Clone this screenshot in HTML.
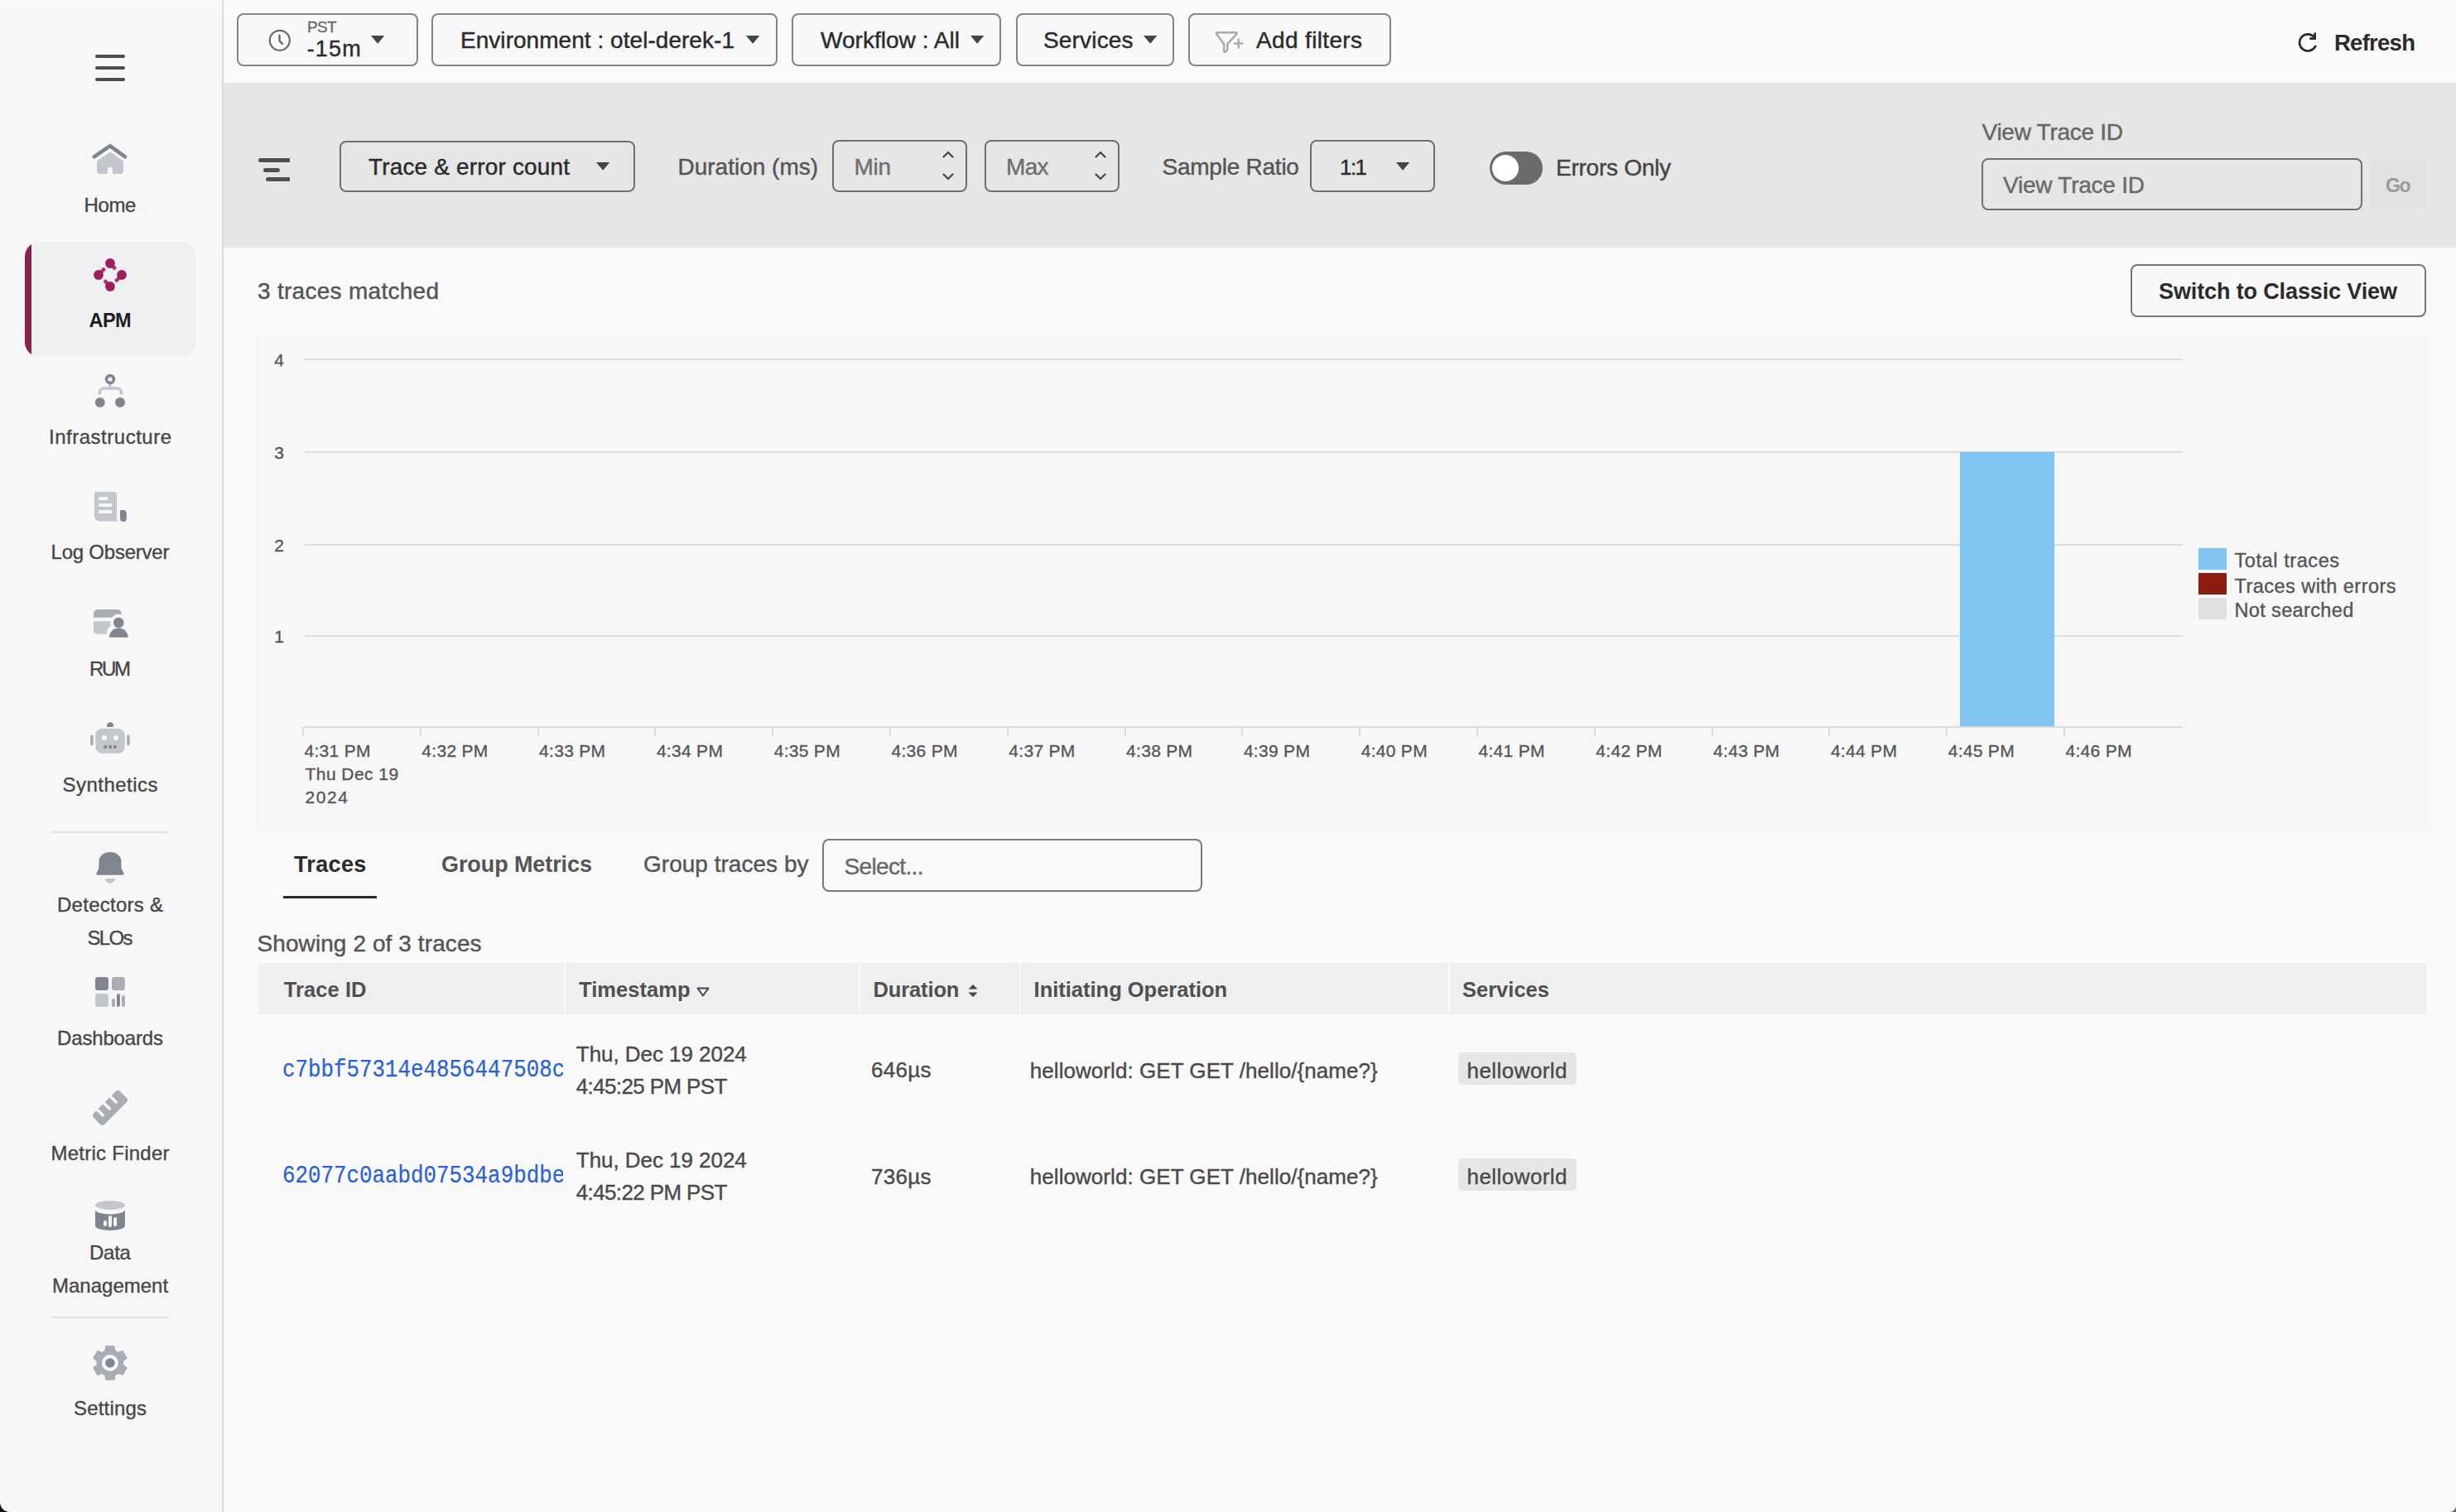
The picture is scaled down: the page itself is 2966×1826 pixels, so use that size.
<!DOCTYPE html>
<html><head><meta charset="utf-8"><title>APM Trace Analyzer</title>
<style>
html,body{margin:0;padding:0;}
body{width:2966px;height:1826px;overflow:hidden;position:relative;background:#f9f9f9;font-family:"Liberation Sans",sans-serif;}
.t{position:absolute;white-space:pre;line-height:1;}
.r{position:absolute;}
svg.r{overflow:visible;}
</style></head><body>
<div class="r" style="left:0px;top:0px;width:268px;height:1826px;background:#f7f7f7;"></div>
<div class="r" style="left:0px;top:0px;width:268px;height:12px;background:#f9f9f9;"></div>
<div class="r" style="left:268px;top:0px;width:2px;height:1826px;background:#dcdcdc;"></div>
<div class="r" style="left:270px;top:0px;width:2696px;height:100px;background:#f9f9f9;"></div>
<div class="r" style="left:270px;top:100px;width:2696px;height:199px;background:#e6e6e6;"></div>
<div class="r" style="left:270px;top:299px;width:2696px;height:1527px;background:#f9f9f9;"></div>
<div class="r" style="left:115px;top:66px;width:36px;height:4px;background:#4d4d4d;border-radius:2px;"></div>
<div class="r" style="left:115px;top:80px;width:36px;height:4px;background:#4d4d4d;border-radius:2px;"></div>
<div class="r" style="left:115px;top:94px;width:36px;height:4px;background:#4d4d4d;border-radius:2px;"></div>
<svg class="r" style="left:108px;top:170px" width="50" height="46" viewBox="0 0 50 46"><path d="M9 24.5 L24.9 13.4 L41 24.5 V36 a4 4 0 0 1 -4 4 H28.1 V34.9 a3.15 3.15 0 0 0 -6.3 0 V40 H13 a4 4 0 0 1 -4 -4 Z" fill="#c2c6cd"/><path d="M5.7 19.3 L24.9 6.2 L43 19.3" fill="none" stroke="#7f8691" stroke-width="4.6" stroke-linecap="round" stroke-linejoin="round"/></svg>
<div class="t" style="left:101.50px;top:236.10px;font-size:24px;color:#474747;-webkit-text-stroke:0.36px currentColor;letter-spacing:-0.360px;">Home</div>
<div class="r" style="left:30px;top:292px;width:206px;height:139px;border-radius:18px;background:#eff0f2;overflow:hidden"><div style="position:absolute;left:0;top:0;width:8px;height:139px;background:#8a1f50"></div></div>
<svg class="r" style="left:100px;top:300px" width="66" height="64" viewBox="0 0 66 64"><g stroke="#c0286f" stroke-width="4.2" stroke-linecap="butt"><line x1="33" y1="18" x2="39.5" y2="25"/><line x1="47" y1="32" x2="39.5" y2="40"/><line x1="33" y1="46" x2="26" y2="38.5"/><line x1="19" y1="32" x2="26.5" y2="24"/></g><circle cx="33" cy="18" r="5.9" fill="#9c1f5b"/><circle cx="19" cy="32" r="5.9" fill="#9c1f5b"/><circle cx="47" cy="32" r="5.9" fill="#9c1f5b"/><circle cx="33" cy="46" r="5.9" fill="#9c1f5b"/></svg>
<div class="t" style="left:107.50px;top:376.41px;font-size:23.5px;color:#1c1e21;font-weight:700;letter-spacing:-0.585px;">APM</div>
<svg class="r" style="left:100px;top:440px" width="66" height="60" viewBox="0 0 66 60"><path d="M20.5 36.5 V34 a5 5 0 0 1 5 -5 H41.5 a5 5 0 0 1 5 5 V36.5" fill="none" stroke="#c2c6cd" stroke-width="3.6"/><rect x="31.3" y="22" width="3.4" height="8" fill="#c2c6cd"/><circle cx="33" cy="18" r="4.4" fill="none" stroke="#7f8691" stroke-width="3.6"/><circle cx="20.8" cy="46" r="6" fill="#7f8691"/><circle cx="45" cy="46" r="6" fill="#7f8691"/></svg>
<div class="t" style="left:59.00px;top:515.70px;font-size:24px;color:#474747;-webkit-text-stroke:0.36px currentColor;letter-spacing:0.511px;">Infrastructure</div>
<svg class="r" style="left:100px;top:580px" width="66" height="60" viewBox="0 0 66 60"><path d="M14 17 a3 3 0 0 1 3 -3 H38 a3 3 0 0 1 3 3 V47 a2.6 2.6 0 0 0 2.6 2.6 H20 a6 6 0 0 1 -6 -6 Z" fill="#c2c6cd"/><line x1="21" y1="22" x2="28.8" y2="22" stroke="#f7f7f7" stroke-width="4" stroke-linecap="round"/><line x1="21" y1="30" x2="33.9" y2="30" stroke="#f7f7f7" stroke-width="4" stroke-linecap="round"/><line x1="21" y1="38" x2="33.9" y2="38" stroke="#f7f7f7" stroke-width="4" stroke-linecap="round"/><path d="M45 36 H49 a3.8 3.8 0 0 1 3.8 3.8 V46 a3.9 3.9 0 0 1 -7.8 0 Z" fill="#7f8691"/></svg>
<div class="t" style="left:61.50px;top:655.30px;font-size:24px;color:#474747;-webkit-text-stroke:0.36px currentColor;letter-spacing:-0.222px;">Log Observer</div>
<svg class="r" style="left:100px;top:725px" width="66" height="60" viewBox="0 0 66 60"><path d="M13 20.8 V16 a5 5 0 0 1 5 -5 H42 a5 5 0 0 1 4.8 5 V17.5 a11 11 0 0 0 -11.8 3.3 Z" fill="#a7acb5"/><path d="M13 25.2 H33.6 L33.5 31 A12 12 0 0 0 28.7 40.7 H18 a5 5 0 0 1 -5 -5 Z" fill="#c2c6cd"/><circle cx="43.3" cy="27" r="6.3" fill="#7f8691"/><path d="M32 44.8 a11.3 11.3 0 0 1 22.6 0 Z" fill="#7f8691"/></svg>
<div class="t" style="left:108.00px;top:796.00px;font-size:24px;color:#474747;-webkit-text-stroke:0.36px currentColor;letter-spacing:-2.300px;">RUM</div>
<svg class="r" style="left:100px;top:860px" width="66" height="60" viewBox="0 0 66 60"><path d="M29.2 18 V16 a3.85 3.85 0 0 1 7.7 0 V18 Z" fill="#7f8691"/><rect x="15.3" y="20" width="35.5" height="29.8" rx="8" fill="#c2c6cd"/><circle cx="26" cy="31" r="3.1" fill="#f7f7f7"/><circle cx="39.9" cy="31" r="3.1" fill="#f7f7f7"/><path d="M27 40 H29 V43.8 H27 a1.9 1.9 0 0 1 0 -3.8 Z M31.2 40 H35 V43.8 H31.2 Z M37 40 H39 a1.9 1.9 0 0 1 0 3.8 H37 Z" fill="#7f8691"/><rect x="9.1" y="27.4" width="3.6" height="13.1" rx="1.8" fill="#a7acb5"/><rect x="53.2" y="27.4" width="3.6" height="13.1" rx="1.8" fill="#a7acb5"/></svg>
<div class="t" style="left:75.50px;top:935.70px;font-size:24px;color:#474747;-webkit-text-stroke:0.36px currentColor;letter-spacing:0.471px;">Synthetics</div>
<div class="r" style="left:62px;top:1004px;width:142px;height:2px;background:#e2e2e2;"></div>
<svg class="r" style="left:100px;top:1020px" width="66" height="60" viewBox="0 0 66 60"><path d="M19.5 20 a13.5 11 0 0 1 27 0 V29 L49.5 34.5 a1.6 1.6 0 0 1 -1.4 2.3 H17.9 a1.6 1.6 0 0 1 -1.4 -2.3 L19.2 29 Z" fill="#7f8691"/><path d="M27 41 H39 a6 5.8 0 0 1 -12 0 Z" fill="#c2c6cd"/></svg>
<div class="t" style="left:69.00px;top:1081.10px;font-size:24px;color:#474747;-webkit-text-stroke:0.36px currentColor;letter-spacing:0.260px;">Detectors &amp;</div>
<div class="t" style="left:105.50px;top:1121.20px;font-size:24px;color:#474747;-webkit-text-stroke:0.36px currentColor;letter-spacing:-1.667px;">SLOs</div>
<svg class="r" style="left:100px;top:1170px" width="66" height="60" viewBox="0 0 66 60"><rect x="15" y="10" width="16" height="16" rx="3.2" fill="#7f8691"/><rect x="35" y="10" width="15.8" height="16" rx="3.2" fill="#a7acb5"/><rect x="15" y="30" width="16" height="16" rx="3.2" fill="#c2c6cd"/><rect x="35" y="36" width="3.9" height="10" rx="1.95" fill="#a7acb5"/><rect x="41" y="30" width="3.9" height="16" rx="1.95" fill="#7f8691"/><rect x="47" y="32" width="3.9" height="14" rx="1.95" fill="#a7acb5"/></svg>
<div class="t" style="left:69.00px;top:1241.50px;font-size:24px;color:#474747;-webkit-text-stroke:0.36px currentColor;letter-spacing:-0.151px;">Dashboards</div>
<svg class="r" style="left:100px;top:1305px" width="66" height="60" viewBox="0 0 66 60"><g transform="translate(32.95,32.85) rotate(-45)"><rect x="-22.5" y="-9.3" width="45" height="18.6" rx="3.8" fill="#a7acb5"/><line x1="-12.5" y1="-11" x2="-12.5" y2="0.2" stroke="#f7f7f7" stroke-width="3.6" stroke-linecap="round"/><line x1="-1.2" y1="-11" x2="-1.2" y2="0.2" stroke="#f7f7f7" stroke-width="3.6" stroke-linecap="round"/><line x1="10" y1="-11" x2="10" y2="0.2" stroke="#f7f7f7" stroke-width="3.6" stroke-linecap="round"/></g></svg>
<div class="t" style="left:61.50px;top:1381.00px;font-size:24px;color:#474747;-webkit-text-stroke:0.36px currentColor;letter-spacing:0.247px;">Metric Finder</div>
<svg class="r" style="left:100px;top:1440px" width="66" height="60" viewBox="0 0 66 60"><ellipse cx="33" cy="15.5" rx="18" ry="5.4" fill="#c2c6cd"/><path d="M15 21 A18 5.4 0 0 0 51 21 V40.5 A18 5.4 0 0 1 15 40.5 Z" fill="#7f8691"/><line x1="27" y1="36" x2="27" y2="39" stroke="#f7f7f7" stroke-width="4" stroke-linecap="round"/><line x1="33" y1="30" x2="33" y2="40" stroke="#f7f7f7" stroke-width="4" stroke-linecap="round"/><line x1="39" y1="32" x2="39" y2="39" stroke="#f7f7f7" stroke-width="4" stroke-linecap="round"/></svg>
<div class="t" style="left:108.00px;top:1501.20px;font-size:24px;color:#474747;-webkit-text-stroke:0.36px currentColor;letter-spacing:-0.253px;">Data</div>
<div class="t" style="left:63.00px;top:1541.00px;font-size:24px;color:#474747;-webkit-text-stroke:0.36px currentColor;">Management</div>
<div class="r" style="left:62px;top:1590px;width:142px;height:2px;background:#e2e2e2;"></div>
<svg class="r" style="left:100px;top:1615px" width="66" height="60" viewBox="0 0 66 60"><polygon points="27.35,16.53 28.29,11.03 37.51,11.03 38.45,16.53 42.65,18.95 47.89,17.02 52.50,25.01 48.21,28.58 48.21,33.42 52.50,36.99 47.89,44.98 42.65,43.05 38.45,45.47 37.51,50.97 28.29,50.97 27.35,45.47 23.15,43.05 17.91,44.98 13.30,36.99 17.59,33.42 17.59,28.58 13.30,25.01 17.91,17.02 23.15,18.95" fill="#a7acb5" stroke="#a7acb5" stroke-width="2" stroke-linejoin="round"/><circle cx="32.9" cy="31" r="10" fill="#f7f7f7"/><circle cx="32.9" cy="31" r="5.8" fill="#7f8691"/></svg>
<div class="t" style="left:89.00px;top:1688.50px;font-size:24px;color:#474747;-webkit-text-stroke:0.36px currentColor;letter-spacing:0.177px;">Settings</div>
<div class="r" style="left:0;top:1814px;width:12px;height:12px;background:radial-gradient(circle at 12px 0px, transparent 11.5px, #111a14 12.5px)"></div>
<div class="r" style="left:286px;top:16px;width:219px;height:64px;background:#f8f8f8;border:2px solid #858585;box-sizing:border-box;border-radius:8px;"></div>
<svg class="r" style="left:320px;top:31px" width="36" height="36" viewBox="0 0 36 36"><circle cx="17.8" cy="17.8" r="12" fill="none" stroke="#6b6b6b" stroke-width="2.2"/><path d="M17.5 11.6 V18.3 L21 21.8" fill="none" stroke="#6b6b6b" stroke-width="2.4" stroke-linecap="round" stroke-linejoin="round"/></svg>
<div class="t" style="left:371.00px;top:23.03px;font-size:19px;color:#666666;-webkit-text-stroke:0.28px currentColor;letter-spacing:-0.727px;">PST</div>
<div class="t" style="left:370.70px;top:46.32px;font-size:27px;color:#2b2b2b;-webkit-text-stroke:0.40px currentColor;letter-spacing:1.147px;">-15m</div>
<svg class="r" style="left:448.2px;top:43.2px" width="20" height="14" viewBox="0 0 20 14"><path d="M0 0 H16.3 L8.15 9.8 Z" fill="#444"/></svg>
<div class="r" style="left:521px;top:16px;width:418px;height:64px;background:#f8f8f8;border:2px solid #858585;box-sizing:border-box;border-radius:8px;"></div>
<div class="t" style="left:556.00px;top:35.30px;font-size:28px;color:#2b2b2b;-webkit-text-stroke:0.42px currentColor;letter-spacing:0.041px;">Environment : otel-derek-1</div>
<svg class="r" style="left:901px;top:42.6px" width="20" height="14" viewBox="0 0 20 14"><path d="M0 0 H16.3 L8.15 9.8 Z" fill="#444"/></svg>
<div class="r" style="left:956px;top:16px;width:253px;height:64px;background:#f8f8f8;border:2px solid #858585;box-sizing:border-box;border-radius:8px;"></div>
<div class="t" style="left:991.00px;top:35.30px;font-size:28px;color:#2b2b2b;-webkit-text-stroke:0.42px currentColor;letter-spacing:0.032px;">Workflow : All</div>
<svg class="r" style="left:1172px;top:42.6px" width="20" height="14" viewBox="0 0 20 14"><path d="M0 0 H16.3 L8.15 9.8 Z" fill="#444"/></svg>
<div class="r" style="left:1227px;top:16px;width:191px;height:64px;background:#f8f8f8;border:2px solid #858585;box-sizing:border-box;border-radius:8px;"></div>
<div class="t" style="left:1260.00px;top:35.30px;font-size:28px;color:#2b2b2b;-webkit-text-stroke:0.42px currentColor;letter-spacing:0.174px;">Services</div>
<svg class="r" style="left:1380.5px;top:42.6px" width="20" height="14" viewBox="0 0 20 14"><path d="M0 0 H16.3 L8.15 9.8 Z" fill="#444"/></svg>
<div class="r" style="left:1435px;top:16px;width:245px;height:64px;background:#f8f8f8;border:2px solid #858585;box-sizing:border-box;border-radius:8px;"></div>
<svg class="r" style="left:1455px;top:25px" width="60" height="50" viewBox="0 0 60 50"><path d="M15.2 14.2 H37.5 a1.2 1.2 0 0 1 0.9 2 L27.3 28.2 V35.6 L24.5 37.8 a0.8 0.8 0 0 1 -1.3 -0.6 V28.2 L14.3 16.2 a1.2 1.2 0 0 1 0.9 -2 Z" fill="none" stroke="#ababab" stroke-width="2.5" stroke-linejoin="round"/><path d="M40.7 22.8 V32.2 M36 27.5 H45.4" stroke="#ababab" stroke-width="2.5" stroke-linecap="round"/></svg>
<div class="t" style="left:1517.00px;top:35.30px;font-size:28px;color:#2b2b2b;-webkit-text-stroke:0.42px currentColor;letter-spacing:0.354px;">Add filters</div>
<svg class="r" style="left:2770px;top:34px" width="34" height="34" viewBox="0 0 34 34"><path d="M24.6 10.6 A10.1 10.1 0 1 0 26.2 21.8" fill="none" stroke="#2b2b2b" stroke-width="2.7" stroke-linecap="round"/><path d="M25.6 5.6 V12.6 H19.2" fill="none" stroke="#2b2b2b" stroke-width="2.7" stroke-linecap="butt" stroke-linejoin="miter"/></svg>
<div class="t" style="left:2819.00px;top:37.51px;font-size:27.5px;color:#2b2b2b;font-weight:700;letter-spacing:-0.740px;">Refresh</div>
<div class="r" style="left:312px;top:191px;width:38px;height:5px;background:#4f4f4f;border-radius:2.5px 0 0 2.5px;"></div>
<div class="r" style="left:318px;top:202.5px;width:20px;height:5.0px;background:#4f4f4f;border-radius:2.5px;"></div>
<div class="r" style="left:321px;top:214px;width:29px;height:5px;background:#4f4f4f;border-radius:2.5px 0 0 2.5px;"></div>
<div class="r" style="left:410px;top:170px;width:357px;height:62px;border:2px solid #707070;box-sizing:border-box;border-radius:8px;"></div>
<div class="t" style="left:445.00px;top:188.40px;font-size:28px;color:#2b2b2b;-webkit-text-stroke:0.42px currentColor;letter-spacing:0.161px;">Trace &amp; error count</div>
<svg class="r" style="left:720.3px;top:196px" width="20" height="14" viewBox="0 0 20 14"><path d="M0 0 H16.3 L8.15 9.8 Z" fill="#444"/></svg>
<div class="t" style="left:818.50px;top:188.40px;font-size:28px;color:#555555;-webkit-text-stroke:0.42px currentColor;">Duration (ms)</div>
<div class="r" style="left:1005px;top:169px;width:163px;height:63px;border:2px solid #707070;box-sizing:border-box;border-radius:8px;"></div>
<div class="t" style="left:1031.50px;top:187.60px;font-size:28px;color:#6f6f6f;-webkit-text-stroke:0.42px currentColor;letter-spacing:-0.290px;">Min</div>
<svg class="r" style="left:1137px;top:180px" width="16" height="40" viewBox="0 0 16 40"><path d="M2.5 9.5 L8 4 L13.5 9.5" fill="none" stroke="#444" stroke-width="2.2" stroke-linecap="round" stroke-linejoin="round"/><path d="M2.5 30.5 L8 36 L13.5 30.5" fill="none" stroke="#444" stroke-width="2.2" stroke-linecap="round" stroke-linejoin="round"/></svg>
<div class="r" style="left:1189px;top:169px;width:163px;height:63px;border:2px solid #707070;box-sizing:border-box;border-radius:8px;"></div>
<div class="t" style="left:1215.00px;top:187.60px;font-size:28px;color:#6f6f6f;-webkit-text-stroke:0.42px currentColor;letter-spacing:-0.660px;">Max</div>
<svg class="r" style="left:1321px;top:180px" width="16" height="40" viewBox="0 0 16 40"><path d="M2.5 9.5 L8 4 L13.5 9.5" fill="none" stroke="#444" stroke-width="2.2" stroke-linecap="round" stroke-linejoin="round"/><path d="M2.5 30.5 L8 36 L13.5 30.5" fill="none" stroke="#444" stroke-width="2.2" stroke-linecap="round" stroke-linejoin="round"/></svg>
<div class="t" style="left:1403.50px;top:187.60px;font-size:28px;color:#555555;-webkit-text-stroke:0.42px currentColor;letter-spacing:-0.240px;">Sample Ratio</div>
<div class="r" style="left:1582px;top:169px;width:151px;height:63px;border:2px solid #707070;box-sizing:border-box;border-radius:8px;"></div>
<div class="t" style="left:1618.00px;top:189.25px;font-size:26px;color:#2b2b2b;-webkit-text-stroke:0.39px currentColor;letter-spacing:-1.570px;">1:1</div>
<svg class="r" style="left:1686px;top:196px" width="20" height="14" viewBox="0 0 20 14"><path d="M0 0 H16.3 L8.15 9.8 Z" fill="#444"/></svg>
<div class="r" style="left:1799px;top:183px;width:64px;height:40px;background:#6b6b6b;border-radius:20px;"></div>
<div class="r" style="left:1802px;top:187px;width:32px;height:32px;background:#ffffff;border-radius:16px;"></div>
<div class="t" style="left:1879.00px;top:188.50px;font-size:28px;color:#444444;-webkit-text-stroke:0.42px currentColor;letter-spacing:-0.254px;">Errors Only</div>
<div class="t" style="left:2393.50px;top:145.90px;font-size:28px;color:#666666;-webkit-text-stroke:0.42px currentColor;letter-spacing:-0.270px;">View Trace ID</div>
<div class="r" style="left:2393px;top:191px;width:460px;height:63px;border:2px solid #707070;box-sizing:border-box;border-radius:8px;"></div>
<div class="t" style="left:2419.00px;top:209.70px;font-size:28px;color:#6a6a6a;-webkit-text-stroke:0.42px currentColor;letter-spacing:-0.228px;">View Trace ID</div>
<div class="r" style="left:2863px;top:191px;width:67px;height:61px;background:#e1e1e1;border-radius:6px;"></div>
<div class="t" style="left:2881.00px;top:212.83px;font-size:23px;color:#9a9a9a;font-weight:700;letter-spacing:-1.470px;">Go</div>
<div class="t" style="left:311.00px;top:337.90px;font-size:28px;color:#555555;-webkit-text-stroke:0.42px currentColor;letter-spacing:0.283px;">3 traces matched</div>
<div class="r" style="left:2573px;top:319px;width:357px;height:64px;background:#f8f8f8;border:2px solid #777777;box-sizing:border-box;border-radius:8px;"></div>
<div class="t" style="left:2607.00px;top:339.43px;font-size:27px;color:#2b2b2b;font-weight:700;letter-spacing:-0.126px;">Switch to Classic View</div>
<div class="r" style="left:310px;top:403px;width:2620px;height:600px;background:#f7f7f7;"></div>
<div class="r" style="left:368px;top:433px;width:2268px;height:2px;background:#dddddd;"></div>
<div class="t" style="left:331.35px;top:423.57px;font-size:21px;color:#555555;-webkit-text-stroke:0.32px currentColor;">4</div>
<div class="r" style="left:368px;top:545px;width:2268px;height:2px;background:#dddddd;"></div>
<div class="t" style="left:331.35px;top:535.57px;font-size:21px;color:#555555;-webkit-text-stroke:0.32px currentColor;">3</div>
<div class="r" style="left:368px;top:657px;width:2268px;height:2px;background:#dddddd;"></div>
<div class="t" style="left:331.35px;top:647.57px;font-size:21px;color:#555555;-webkit-text-stroke:0.32px currentColor;">2</div>
<div class="r" style="left:368px;top:767px;width:2268px;height:2px;background:#dddddd;"></div>
<div class="t" style="left:331.35px;top:757.57px;font-size:21px;color:#555555;-webkit-text-stroke:0.32px currentColor;">1</div>
<div class="r" style="left:366px;top:877px;width:2270px;height:2px;background:#dcdcdc;"></div>
<div class="r" style="left:2367px;top:546px;width:114px;height:331px;background:#80c4f4;"></div>
<div class="r" style="left:365px;top:878px;width:2px;height:11px;background:#dcdcdc;"></div>
<div class="t" style="left:367.50px;top:895.67px;font-size:21px;color:#555555;-webkit-text-stroke:0.32px currentColor;letter-spacing:0.296px;">4:31 PM</div>
<div class="r" style="left:507px;top:878px;width:2px;height:11px;background:#dcdcdc;"></div>
<div class="t" style="left:509.30px;top:895.67px;font-size:21px;color:#555555;-webkit-text-stroke:0.32px currentColor;letter-spacing:0.296px;">4:32 PM</div>
<div class="r" style="left:649px;top:878px;width:2px;height:11px;background:#dcdcdc;"></div>
<div class="t" style="left:651.10px;top:895.67px;font-size:21px;color:#555555;-webkit-text-stroke:0.32px currentColor;letter-spacing:0.296px;">4:33 PM</div>
<div class="r" style="left:790px;top:878px;width:2px;height:11px;background:#dcdcdc;"></div>
<div class="t" style="left:792.90px;top:895.67px;font-size:21px;color:#555555;-webkit-text-stroke:0.32px currentColor;letter-spacing:0.296px;">4:34 PM</div>
<div class="r" style="left:932px;top:878px;width:2px;height:11px;background:#dcdcdc;"></div>
<div class="t" style="left:934.70px;top:895.67px;font-size:21px;color:#555555;-webkit-text-stroke:0.32px currentColor;letter-spacing:0.296px;">4:35 PM</div>
<div class="r" style="left:1074px;top:878px;width:2px;height:11px;background:#dcdcdc;"></div>
<div class="t" style="left:1076.50px;top:895.67px;font-size:21px;color:#555555;-webkit-text-stroke:0.32px currentColor;letter-spacing:0.296px;">4:36 PM</div>
<div class="r" style="left:1216px;top:878px;width:2px;height:11px;background:#dcdcdc;"></div>
<div class="t" style="left:1218.30px;top:895.67px;font-size:21px;color:#555555;-webkit-text-stroke:0.32px currentColor;letter-spacing:0.296px;">4:37 PM</div>
<div class="r" style="left:1358px;top:878px;width:2px;height:11px;background:#dcdcdc;"></div>
<div class="t" style="left:1360.10px;top:895.67px;font-size:21px;color:#555555;-webkit-text-stroke:0.32px currentColor;letter-spacing:0.296px;">4:38 PM</div>
<div class="r" style="left:1499px;top:878px;width:2px;height:11px;background:#dcdcdc;"></div>
<div class="t" style="left:1501.90px;top:895.67px;font-size:21px;color:#555555;-webkit-text-stroke:0.32px currentColor;letter-spacing:0.296px;">4:39 PM</div>
<div class="r" style="left:1641px;top:878px;width:2px;height:11px;background:#dcdcdc;"></div>
<div class="t" style="left:1643.70px;top:895.67px;font-size:21px;color:#555555;-webkit-text-stroke:0.32px currentColor;letter-spacing:0.296px;">4:40 PM</div>
<div class="r" style="left:1783px;top:878px;width:2px;height:11px;background:#dcdcdc;"></div>
<div class="t" style="left:1785.50px;top:895.67px;font-size:21px;color:#555555;-webkit-text-stroke:0.32px currentColor;letter-spacing:0.296px;">4:41 PM</div>
<div class="r" style="left:1925px;top:878px;width:2px;height:11px;background:#dcdcdc;"></div>
<div class="t" style="left:1927.30px;top:895.67px;font-size:21px;color:#555555;-webkit-text-stroke:0.32px currentColor;letter-spacing:0.296px;">4:42 PM</div>
<div class="r" style="left:2067px;top:878px;width:2px;height:11px;background:#dcdcdc;"></div>
<div class="t" style="left:2069.10px;top:895.67px;font-size:21px;color:#555555;-webkit-text-stroke:0.32px currentColor;letter-spacing:0.296px;">4:43 PM</div>
<div class="r" style="left:2208px;top:878px;width:2px;height:11px;background:#dcdcdc;"></div>
<div class="t" style="left:2210.90px;top:895.67px;font-size:21px;color:#555555;-webkit-text-stroke:0.32px currentColor;letter-spacing:0.296px;">4:44 PM</div>
<div class="r" style="left:2350px;top:878px;width:2px;height:11px;background:#dcdcdc;"></div>
<div class="t" style="left:2352.70px;top:895.67px;font-size:21px;color:#555555;-webkit-text-stroke:0.32px currentColor;letter-spacing:0.296px;">4:45 PM</div>
<div class="r" style="left:2492px;top:878px;width:2px;height:11px;background:#dcdcdc;"></div>
<div class="t" style="left:2494.50px;top:895.67px;font-size:21px;color:#555555;-webkit-text-stroke:0.32px currentColor;letter-spacing:0.296px;">4:46 PM</div>
<div class="t" style="left:368.50px;top:923.67px;font-size:21px;color:#555555;-webkit-text-stroke:0.32px currentColor;letter-spacing:0.448px;">Thu Dec 19</div>
<div class="t" style="left:368.50px;top:951.67px;font-size:21px;color:#555555;-webkit-text-stroke:0.32px currentColor;letter-spacing:1.592px;">2024</div>
<div class="r" style="left:2655px;top:662px;width:34px;height:26px;background:#80c4f4;"></div>
<div class="r" style="left:2655px;top:692px;width:34px;height:26px;background:#8c1c12;"></div>
<div class="r" style="left:2655px;top:722px;width:34px;height:26px;background:#e0e0e0;"></div>
<div class="t" style="left:2698.50px;top:665.61px;font-size:23.5px;color:#555555;-webkit-text-stroke:0.35px currentColor;letter-spacing:0.582px;">Total traces</div>
<div class="t" style="left:2698.50px;top:696.61px;font-size:23.5px;color:#555555;-webkit-text-stroke:0.35px currentColor;letter-spacing:0.460px;">Traces with errors</div>
<div class="t" style="left:2698.50px;top:726.31px;font-size:23.5px;color:#555555;-webkit-text-stroke:0.35px currentColor;letter-spacing:0.361px;">Not searched</div>
<div class="t" style="left:355.00px;top:1031.22px;font-size:27px;color:#2b2b2b;font-weight:700;letter-spacing:0.362px;">Traces</div>
<div class="r" style="left:342px;top:1082px;width:113px;height:3px;background:#2b2b2b;"></div>
<div class="t" style="left:533.00px;top:1031.22px;font-size:27px;color:#555555;font-weight:700;letter-spacing:-0.088px;">Group Metrics</div>
<div class="t" style="left:777.00px;top:1030.40px;font-size:28px;color:#555555;-webkit-text-stroke:0.42px currentColor;letter-spacing:0.020px;">Group traces by</div>
<div class="r" style="left:993px;top:1013px;width:459px;height:64px;background:#f9f9f9;border:2px solid #7a7a7a;box-sizing:border-box;border-radius:8px;"></div>
<div class="t" style="left:1019.50px;top:1032.90px;font-size:28px;color:#6a6a6a;-webkit-text-stroke:0.42px currentColor;letter-spacing:-0.653px;">Select...</div>
<div class="t" style="left:310.50px;top:1125.70px;font-size:28px;color:#555555;-webkit-text-stroke:0.42px currentColor;letter-spacing:0.089px;">Showing 2 of 3 traces</div>
<div class="r" style="left:312px;top:1163px;width:2618px;height:62px;background:#efefef;"></div>
<div class="r" style="left:681px;top:1163px;width:2px;height:62px;background:#f9f9f9;"></div>
<div class="r" style="left:1037px;top:1163px;width:2px;height:62px;background:#f9f9f9;"></div>
<div class="r" style="left:1231px;top:1163px;width:2px;height:62px;background:#f9f9f9;"></div>
<div class="r" style="left:1749px;top:1163px;width:2px;height:62px;background:#f9f9f9;"></div>
<div class="t" style="left:342.80px;top:1183.26px;font-size:25.5px;color:#505050;font-weight:700;letter-spacing:0.072px;">Trace ID</div>
<div class="t" style="left:699.00px;top:1182.96px;font-size:25.5px;color:#505050;font-weight:700;letter-spacing:0.046px;">Timestamp</div>
<svg class="r" style="left:840px;top:1191px" width="20" height="14" viewBox="0 0 20 14"><path d="M2.5 2.5 H15.5 L9 11.5 Z" fill="none" stroke="#444" stroke-width="2" stroke-linejoin="round"/></svg>
<div class="t" style="left:1054.60px;top:1182.96px;font-size:25.5px;color:#505050;font-weight:700;letter-spacing:-0.144px;">Duration</div>
<svg class="r" style="left:1167px;top:1187px" width="16" height="20" viewBox="0 0 16 20"><path d="M2.5 7.5 L8 2 L13.5 7.5 Z M2.5 11.5 L8 17 L13.5 11.5 Z" fill="#444"/></svg>
<div class="t" style="left:1248.60px;top:1182.96px;font-size:25.5px;color:#505050;font-weight:700;letter-spacing:-0.011px;">Initiating Operation</div>
<div class="t" style="left:1766.00px;top:1182.96px;font-size:25.5px;color:#505050;font-weight:700;">Services</div>
<div class="r" style="left:330px;top:1260.0px;width:349.5px;height:60px;overflow:hidden"><div class="t" style="left:10.70px;top:18.02px;font-size:29.5px;color:#2a62d6;-webkit-text-stroke:0.25px currentColor;font-family:'Liberation Mono',monospace;transform:scaleX(0.876);transform-origin:0.00px 0;">c7bbf57314e4856447508c</div></div>
<div class="t" style="left:695.80px;top:1259.75px;font-size:26px;color:#4a4a4a;-webkit-text-stroke:0.39px currentColor;letter-spacing:-0.047px;">Thu, Dec 19 2024</div>
<div class="t" style="left:695.80px;top:1298.85px;font-size:26px;color:#4a4a4a;-webkit-text-stroke:0.39px currentColor;letter-spacing:-0.632px;">4:45:25 PM PST</div>
<div class="t" style="left:1052.00px;top:1279.25px;font-size:26px;color:#4a4a4a;-webkit-text-stroke:0.39px currentColor;letter-spacing:0.282px;">646µs</div>
<div class="t" style="left:1243.80px;top:1279.55px;font-size:26px;color:#4a4a4a;-webkit-text-stroke:0.39px currentColor;letter-spacing:0.054px;">helloworld: GET GET /hello/{name?}</div>
<div class="r" style="left:1761px;top:1271px;width:143px;height:39px;background:#e6e6e6;border-radius:5px;"></div>
<div class="t" style="left:1771.60px;top:1280.05px;font-size:26px;color:#4a4a4a;-webkit-text-stroke:0.39px currentColor;letter-spacing:0.430px;">helloworld</div>
<div class="r" style="left:330px;top:1388.3px;width:349.5px;height:60px;overflow:hidden"><div class="t" style="left:10.70px;top:18.02px;font-size:29.5px;color:#2a62d6;-webkit-text-stroke:0.25px currentColor;font-family:'Liberation Mono',monospace;transform:scaleX(0.876);transform-origin:0.00px 0;">62077c0aabd07534a9bdbe</div></div>
<div class="t" style="left:695.80px;top:1388.05px;font-size:26px;color:#4a4a4a;-webkit-text-stroke:0.39px currentColor;letter-spacing:-0.047px;">Thu, Dec 19 2024</div>
<div class="t" style="left:695.80px;top:1427.15px;font-size:26px;color:#4a4a4a;-webkit-text-stroke:0.39px currentColor;letter-spacing:-0.632px;">4:45:22 PM PST</div>
<div class="t" style="left:1052.00px;top:1407.55px;font-size:26px;color:#4a4a4a;-webkit-text-stroke:0.39px currentColor;letter-spacing:0.282px;">736µs</div>
<div class="t" style="left:1243.80px;top:1407.85px;font-size:26px;color:#4a4a4a;-webkit-text-stroke:0.39px currentColor;letter-spacing:0.054px;">helloworld: GET GET /hello/{name?}</div>
<div class="r" style="left:1761px;top:1399px;width:143px;height:39px;background:#e6e6e6;border-radius:5px;"></div>
<div class="t" style="left:1771.60px;top:1408.35px;font-size:26px;color:#4a4a4a;-webkit-text-stroke:0.39px currentColor;letter-spacing:0.430px;">helloworld</div>
<div class="r" style="left:2958px;top:1818px;width:8px;height:8px;background:radial-gradient(circle at 0px 0px, transparent 7.5px, #666 8.5px)"></div>
<script>(function(){var s=window.innerWidth/2966;if(s>0&&s<0.99){document.documentElement.style.zoom=s;}})();</script>
</body></html>
